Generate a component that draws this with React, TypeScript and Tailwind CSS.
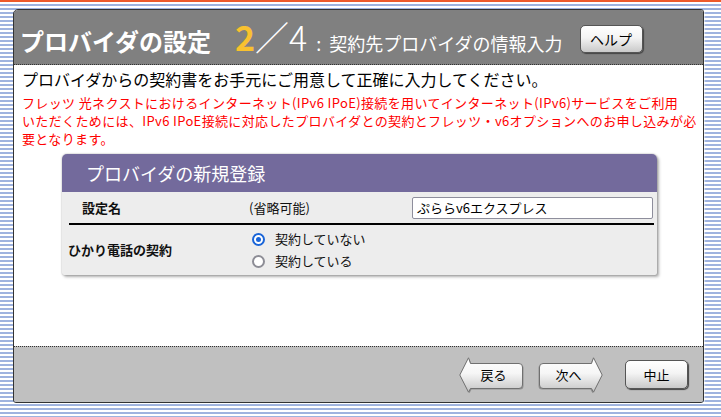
import React from "react";

const FONT = { fontFamily: '"Noto Sans CJK JP", "Noto Sans", sans-serif' };

function ArrowButton({ label, dir }: { label: string; dir: "left" | "right" }) {
  const id = dir === "left" ? "gl" : "gr";
  const path =
    "M9.5 0.8 L11.5 6.5 H60 Q63.5 6.5 63.5 10 V28 Q63.5 31.5 60 31.5 H11.5 L9.5 35.2 L0.8 18 Z";
  return (
    <div className="relative w-[65px] h-[36px]">
      <svg
        width="65"
        height="37"
        viewBox="0 0 65 37"
        className="absolute left-0 top-0"
        style={dir === "right" ? { transform: "scaleX(-1)" } : undefined}
      >
        <defs>
          <linearGradient id={id} x1="0" y1="0" x2="0" y2="1">
            <stop offset="0" stopColor="#ffffff" />
            <stop offset="0.45" stopColor="#f6f6f6" />
            <stop offset="1" stopColor="#c4c4c4" />
          </linearGradient>
        </defs>
        <path d={path} transform="translate(1 1)" fill="#6a6a6a" opacity="0.55" />
        <path d={path} fill={`url(#${id})`} stroke="#707070" strokeWidth="1" />
      </svg>
      <div
        className={`absolute inset-0 flex items-center justify-center text-[13px] text-black ${
          dir === "left" ? "pl-[4px]" : "pr-[4px]"
        }`}
      >
        {label}
      </div>
    </div>
  );
}

function Radio({ checked, label }: { checked: boolean; label: string }) {
  return (
    <div className="flex items-center h-[22px]">
      {checked ? (
        <span className="w-[13px] h-[13px] rounded-full border-2 border-[#1a65d8] bg-white flex items-center justify-center">
          <span className="w-[5px] h-[5px] rounded-full bg-[#1a65d8]" />
        </span>
      ) : (
        <span className="w-[13px] h-[13px] rounded-full border-2 border-[#8d8d96] bg-white" />
      )}
      <span className="ml-[10px] text-[13px] text-[#111]">{label}</span>
    </div>
  );
}

export default function App() {
  return (
    <div
      className="w-[721px] h-[417px] overflow-hidden bg-[repeating-linear-gradient(180deg,#9fb3df_0px,#9fb3df_2px,#ffffff_2px,#ffffff_4px)]"
      style={FONT}
    >
      <div className="h-[2px] bg-[#ee5a2a]" />
      <div className="h-[1px] bg-white" />
      <div className="ml-[13px] mt-[6px] w-[691px] h-[394px] border border-[#333] rounded-tl-[5px] rounded-tr-[3px] rounded-b-[3px] flex flex-col overflow-hidden shadow-[1px_1px_1px_rgba(255,255,255,0.6)]">
        {/* header */}
        <div className="h-[55px] shrink-0 bg-[#808080] border-b border-dotted border-[#333] flex items-baseline pt-[10px] pl-[6px] text-white">
          <span className="text-[24px] font-bold leading-none">プロバイダの設定</span>
          <span className="ml-[24px] text-[34px] font-bold leading-none text-[#f8c12f]">2</span>
          <span className="text-[34px] font-light leading-none">／4</span>
          <span className="ml-[9px] text-[18px] leading-none">:</span>
          <span className="ml-[8px] text-[18px] leading-none">契約先プロバイダの情報入力</span>
          <div className="self-start mt-[5px] ml-[17px] w-[63px] h-[28px] rounded-[5px] border border-[#555] bg-[linear-gradient(180deg,#ffffff_0%,#f4f4f4_45%,#c9c9c9_100%)] shadow-[1px_1px_1px_#444] flex items-center justify-center text-[14px] text-black">
            ヘルプ
          </div>
        </div>

        {/* body */}
        <div className="flex-1 bg-white pl-[8px] pt-[2px]">
          <p className="text-[16px] leading-[24px] text-black whitespace-nowrap">
            プロバイダからの契約書をお手元にご用意して正確に入力してください。
          </p>
          <div className="mt-[3px] text-[13px] leading-[18px] tracking-[0.36px] text-[#ff0000]">
            <div className="whitespace-nowrap">
              フレッツ 光ネクストにおけるインターネット(IPv6 IPoE)接続を用いてインターネット(IPv6)サービスをご利用
            </div>
            <div className="whitespace-nowrap">
              いただくためには、IPv6 IPoE接続に対応したプロバイダとの契約とフレッツ・v6オプションへのお申し込みが必
            </div>
            <div className="whitespace-nowrap">要となります。</div>
          </div>

          {/* card */}
          <div className="ml-[40px] mt-[6px] w-[595px] rounded-t-[5px] rounded-b-[2px] bg-[#ededed] shadow-[0_0_2px_rgba(0,0,0,0.35),2px_2px_3px_rgba(0,0,0,0.3)]">
            <div className="h-[38px] bg-[#736a9c] rounded-t-[5px] pl-[24px] flex items-center text-white text-[18px]">
              プロバイダの新規登録
            </div>
            <div className="pl-[7px] pr-[3px]">
              <div className="h-[33px] flex items-center border-b-2 border-black">
                <span className="w-[180px] pl-[13px] text-[13px] font-bold text-[#111]">設定名</span>
                <span className="w-[163px] text-[13px] text-[#111]">(省略可能)</span>
                <div className="w-[241px] h-[22px] rounded-[2px] border border-[#8e8e9c] bg-white flex items-center pl-[4px] text-[13px] text-black">
                  ぷららv6エクスプレス
                </div>
              </div>
              <div className="h-[50px] flex items-center">
                <span className="w-[184px] -ml-[1px] text-[13px] font-bold text-[#111]">ひかり電話の契約</span>
                <div className="flex flex-col">
                  <Radio checked label="契約していない" />
                  <Radio checked={false} label="契約している" />
                </div>
              </div>
            </div>
          </div>
        </div>

        {/* footer */}
        <div className="h-[56px] shrink-0 bg-[#c0c0c0] border-t border-dotted border-[#333] flex items-center justify-end pr-[15px]">
          <ArrowButton label="戻る" dir="left" />
          <div className="ml-[14px]">
            <ArrowButton label="次へ" dir="right" />
          </div>
          <div className="ml-[22px] w-[63px] h-[29px] rounded-[5px] border border-[#555] bg-[linear-gradient(180deg,#ffffff_0%,#f4f4f4_45%,#c9c9c9_100%)] shadow-[1px_1px_1px_#444] flex items-center justify-center text-[13px] text-black">
            中止
          </div>
        </div>
      </div>
    </div>
  );
}
